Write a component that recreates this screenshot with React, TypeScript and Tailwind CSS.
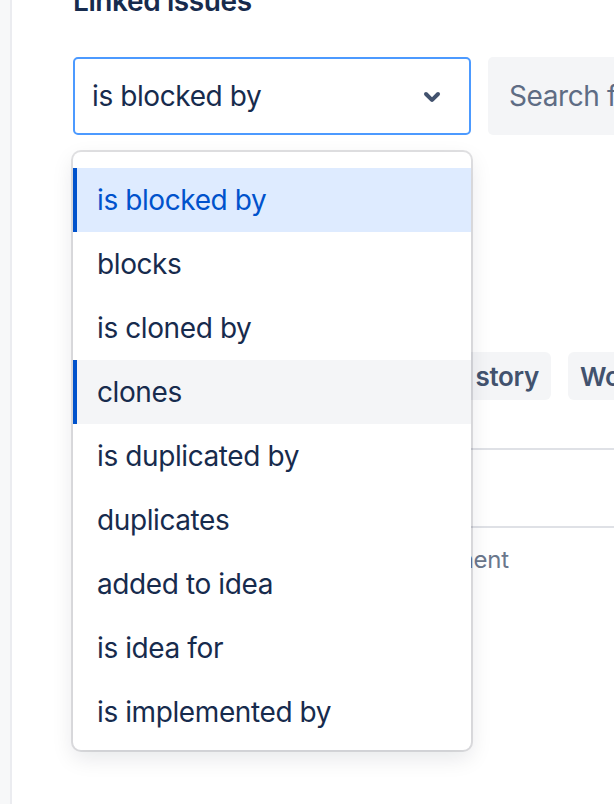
const options = [
  "is blocked by",
  "blocks",
  "is cloned by",
  "clones",
  "is duplicated by",
  "duplicates",
  "added to idea",
  "is idea for",
  "is implemented by",
];

function ChevronDown() {
  return (
    <svg width="48" height="48" viewBox="0 0 24 24" className="shrink-0 text-[#42526e]">
      <path
        fill="currentColor"
        d="M8.292 10.293a1.009 1.009 0 000 1.419l2.939 2.965c.218.215.5.322.779.322s.556-.107.769-.322l2.93-2.955a1.01 1.01 0 000-1.419.987.987 0 00-1.406 0l-2.298 2.317-2.307-2.327a.99.99 0 00-1.406 0z"
      />
    </svg>
  );
}

export default function App() {
  const selected = 0;
  const hovered = 3;

  return (
    <div className="flex h-[804px] w-full overflow-hidden bg-white font-['Inter','Noto_Sans',sans-serif] text-[#172b4d]">
      <div className="w-[12px] shrink-0 border-r-2 border-[#ebecf0] bg-[#f7f8f9]" />

      <div className="relative flex-1 pl-[61px]">
        <h2 className="-mt-[15px] text-[28px] font-semibold leading-[32px] tracking-[-0.4px] text-[#172b4d]">
          Linked issues
        </h2>

        <div className="mt-[40px] flex gap-[17px]">
          <div className="flex h-[78px] w-[398px] shrink-0 items-center justify-between rounded-[5px] border-2 border-[#4c9aff] pl-[17px] pr-[13px]">
            <span className="text-[28px] tracking-[-0.4px]">is blocked by</span>
            <ChevronDown />
          </div>
          <div className="flex h-[78px] flex-1 items-center rounded-l-[5px] bg-[#f4f5f7] pl-[21px]">
            <span className="whitespace-nowrap text-[28px] tracking-[-0.4px] text-[#5e6c84]">
              Search for issues
            </span>
          </div>
        </div>

        {/* content under the menu */}
        <div className="mt-[217px] flex gap-[17px] whitespace-nowrap">
          <div className="flex h-[48px] w-[160px] shrink-0 items-center rounded-[6px] bg-[#f4f5f7] px-[12px] text-[26px] font-semibold text-[#42526e]">
            Bug
          </div>
          <div className="flex h-[48px] w-[301px] shrink-0 items-center justify-end rounded-[6px] bg-[#f4f5f7] px-[12px] text-[26px] font-semibold tracking-[-0.3px] text-[#42526e]">
            User story
          </div>
          <div className="flex h-[48px] items-center rounded-l-[6px] bg-[#f4f5f7] pl-[12px] pr-[40px] text-[26px] font-semibold tracking-[-0.3px] text-[#42526e]">
            Work item
          </div>
        </div>
        <div className="mt-[48px] border-t-2 border-[#dfe1e6]" />
        <div className="h-[76px]" />
        <div className="border-t-2 border-[#dfe1e6]" />
        <div className="mt-[14px] w-[436px] text-right text-[24px] tracking-[-0.2px] text-[#6b778c]">
          Add a comment
        </div>

        {/* open menu */}
        <div className="absolute left-[61px] top-[152px] w-[398px] rounded-[8px] bg-white pb-[6px] pt-[16px] shadow-[0_0_0_2px_rgba(13,20,36,0.12),0_8px_22px_rgba(13,20,36,0.1)]">
          {options.map((label, i) => (
            <div
              key={label}
              className={
                i === selected
                  ? "flex h-[64px] items-center border-l-4 border-[#0052cc] bg-[#deebff] pl-[20px] text-[28px] tracking-[-0.4px] text-[#0052cc]"
                  : i === hovered
                    ? "flex h-[64px] items-center border-l-4 border-[#0052cc] bg-[#f4f5f7] pl-[20px] text-[28px] tracking-[-0.4px] text-[#172b4d]"
                    : "flex h-[64px] items-center border-l-4 border-transparent pl-[20px] text-[28px] tracking-[-0.4px] text-[#172b4d]"
              }
            >
              {label}
            </div>
          ))}
        </div>
      </div>
    </div>
  );
}
